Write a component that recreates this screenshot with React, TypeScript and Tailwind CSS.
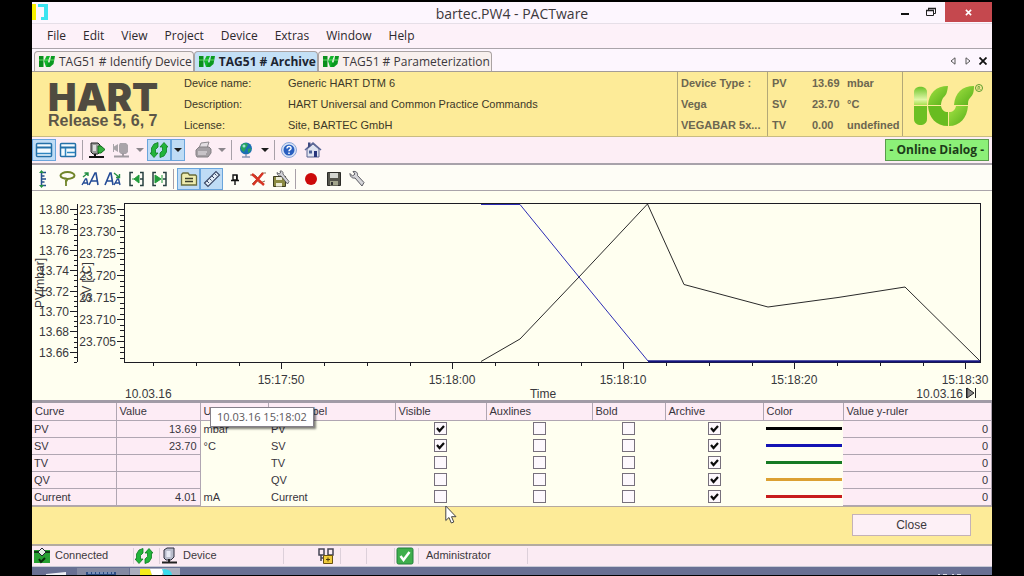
import clsx from "clsx";
import { useState } from "react";
import type { ReactNode } from "react";

const MENU_ITEMS = [
  "File",
  "Edit",
  "View",
  "Project",
  "Device",
  "Extras",
  "Window",
  "Help",
];

const TABS = ["TAG51 # Identify Device", "TAG51 # Archive", "TAG51 # Parameterization"];

const DEVICE_INFO = [
  { label: "Device name:", value: "Generic HART DTM 6" },
  { label: "Description:", value: "HART Universal and Common Practice Commands" },
  { label: "License:", value: "Site, BARTEC GmbH" },
];

const READINGS = [
  { name: "PV", value: "13.69", unit: "mbar" },
  { name: "SV", value: "23.70", unit: "°C" },
  { name: "TV", value: "0.00", unit: "undefined" },
];

interface Curve {
  name: string;
  value: string;
  unit: string;
  visible: boolean;
  auxlines: boolean;
  bold: boolean;
  archive: boolean;
  color: string;
}

type CurveFlag = "visible" | "auxlines" | "bold" | "archive";

const FLAGS: CurveFlag[] = ["visible", "auxlines", "bold", "archive"];

const base = { visible: false, auxlines: false, bold: false, archive: true };

const INITIAL_CURVES: Curve[] = [
  { ...base, name: "PV", value: "13.69", unit: "mbar", visible: true, color: "bg-black" },
  { ...base, name: "SV", value: "23.70", unit: "°C", visible: true, color: "bg-[#1414b4]" },
  { ...base, name: "TV", value: "", unit: "", color: "bg-[#167a24]" },
  { ...base, name: "QV", value: "", unit: "", color: "bg-[#dca032]" },
  { ...base, name: "Current", value: "4.01", unit: "mA", color: "bg-[#c81c1c]" },
];

const COLUMNS = [
  { label: "Curve", width: "w-[84px]" },
  { label: "Value", width: "w-[84px]" },
  { label: "Unit", width: "w-[68px]" },
  { label: "Curve label", width: "w-[127px]" },
  { label: "Visible", width: "w-[91px]" },
  { label: "Auxlines", width: "w-[106px]" },
  { label: "Bold", width: "w-[73px]" },
  { label: "Archive", width: "w-[98px]" },
  { label: "Color", width: "w-20" },
  { label: "Value y-ruler", width: "" },
];

const Icon = ({ children, className }: { children: ReactNode; className?: string }) => (
  <svg
    viewBox="0 0 18 18"
    className={clsx("size-[18px] shrink-0", className)}
    fill="none"
    aria-hidden="true"
  >
    {children}
  </svg>
);

const TabIcon = () => (
  <svg viewBox="0 0 16 13" className="h-[13px] w-4 shrink-0" aria-hidden="true">
    <path d="M0 1h4.500v11H0z" fill="#0a8f1c" />
    <path d="M5 6 7.500 1H11L9 6l2 6H7z" fill="#12b52a" />
    <path d="M9 7c1 2 2 1 3-6h4l-1.500 8-3.500 3H8z" fill="#0a9a1f" />
    <path d="M0 5h15" stroke="#7ce87c" strokeWidth=".8" />
  </svg>
);

const RefreshIcon = () => (
  <Icon>
    <path d="M8 1.500 4 3 1.500 7v5L0 12l4 4.500L8 12l-2.500 0V8.500L8 6z" fill="#22b43a" stroke="#0c7d20" strokeWidth=".8" />
    <path d="m10 16.500 4-1.500 2.500-4V6l1.500 0L14 1.500 10 6l2.500 0v3.500L10 12z" fill="#22b43a" stroke="#0c7d20" strokeWidth=".8" />
  </Icon>
);

const WindowIcon = ({ split }: { split?: boolean }) => (
  <Icon>
    <rect x="1.500" y="2.500" width="15" height="13" rx="1" fill="#f4fbff" stroke="#2470a8" strokeWidth="1.500" />
    <path d="M2 6.500h14" stroke="#2470a8" strokeWidth="2" />
    {split ? (
      <path d="M6.500 7v8M8 11.500h8" stroke="#2f86c0" strokeWidth="1.500" />
    ) : (
      <path d="M2 12.500h14" stroke="#2f86c0" strokeWidth="1.500" />
    )}
  </Icon>
);

const ConnectIcon = () => (
  <Icon>
    <path d="M3 2h7l2 2v7l-2 2H5l-2-2z" fill="#9a9a9a" stroke="#222" />
    <path d="M5 4h3v6H5z" fill="#dcdcdc" />
    <path d="M7 13v3M1 16h15" stroke="#111" strokeWidth="2" />
    <path d="M10 5h3l4 3.500-4 3.500h-3z" fill="#35b040" stroke="#126c1c" />
  </Icon>
);

const DisconnectIcon = () => (
  <Icon>
    <path d="M8 2h6l2 2v7l-2 2H9l-2-2V4z" fill="#a9a4a9" />
    <path d="M11 12v3M2 15.500h15" stroke="#a09aa0" strokeWidth="2" />
    <path d="M1 3h1v2.500l4-2.500v8L2 8.500V11H1z" fill="#a9a4a9" />
  </Icon>
);

const PrinterIcon = () => (
  <Icon>
    <path d="m7 2 8-1-2 6H5z" fill="#e3dfe3" stroke="#8d898d" />
    <path d="m2 9 3-3h10l2 2v4l-3 4H3l-1-2z" fill="#a39fa3" stroke="#858185" />
    <path d="M4 11h9M4 13h8" stroke="#ece8ec" />
  </Icon>
);

const GlobeIcon = () => (
  <Icon>
    <circle cx="9" cy="7.500" r="6" fill="#1c6fb4" />
    <path d="M4.500 4c3-3.500 6.500-2 6.500 0L9 7l-2 4C3 9 3.500 6 4.500 4z" fill="#25a35c" />
    <path d="m11 8 3-1c0 2-1 4-3 5z" fill="#25a35c" />
    <circle cx="7" cy="5" r="1.500" fill="#9fe0dc" />
    <path d="M5 16h8M9 13v3" stroke="#8a97b4" strokeWidth="1.500" />
  </Icon>
);

const HelpIcon = () => (
  <Icon>
    <circle cx="9" cy="9" r="7.500" fill="#d8e3f6" stroke="#8aa5d8" />
    <circle cx="9" cy="9" r="5.500" fill="#2a5fc0" />
    <path d="M7 7.500c0-3 4.500-2.500 4 0-.3 1.200-2 1.200-2 2.800M9 11.500v1.500" stroke="#fff" strokeWidth="1.500" />
  </Icon>
);

const HomeIcon = () => (
  <Icon>
    <path d="M3 8v8h12V8L9 3z" fill="#dfe3f0" stroke="#5b6590" />
    <path d="m1 9 8-7 8 7" stroke="#5b6796" strokeWidth="1.600" />
    <path d="M4 1.500h2.500V5L4 7z" fill="#3e4a80" />
    <path d="M10 10h3v6h-3z" fill="#27357c" />
    <path d="M5 9.500h3v3H5z" fill="#4d6296" />
  </Icon>
);

const RulerYIcon = () => (
  <Icon>
    <path d="M11 2.500H6.500v13H11M6.500 6h3M6.500 9H11M6.500 12h3" stroke="#26508e" strokeWidth="1.500" />
    <path d="M6.500 0 4 3h5zM6.500 18 4 15h5z" fill="#249044" />
  </Icon>
);

const LassoIcon = () => (
  <Icon>
    <ellipse cx="9.500" cy="5.500" rx="7" ry="3.500" stroke="#71852a" strokeWidth="2" />
    <path d="M6 8.500c4-1 4 3 1 3M8 10v6" stroke="#71852a" strokeWidth="1.800" />
  </Icon>
);

const FontScaleIcon = ({ shrink }: { shrink?: boolean }) => (
  <Icon>
    {shrink ? (
      <>
        <path d="M1 15 6 3h1l2 12M3 11h5" stroke="#244c96" strokeWidth="1.600" />
        <path d="m10 15 3.500-6h1L16 15M11.500 13H16" stroke="#244c96" strokeWidth="1.400" />
        <path d="m10 3 5 4M15.500 4v3.500H12" stroke="#249044" strokeWidth="1.400" />
      </>
    ) : (
      <>
        <path d="m1 15 3.500-6h1L7 15M2.500 13H7" stroke="#244c96" strokeWidth="1.400" />
        <path d="m8 15 6-12h1l2 12M10 11h6" stroke="#244c96" strokeWidth="1.600" />
        <path d="m2 7 5-4M3.500 3H7v3" stroke="#249044" strokeWidth="1.400" />
      </>
    )}
  </Icon>
);

const RangeIcon = ({ filled }: { filled?: boolean }) => (
  <Icon>
    <path d="M6 2.500H3v13h3M13 2.500h3v13h-3M13 9h3" stroke="#274040" strokeWidth="1.500" />
    {filled ? (
      <path d="m5 5 6 4-6 4zM12 5v8" fill="#219b3a" stroke="#219b3a" />
    ) : (
      <path d="m12 5-5 4 5 4zM5 9h2" fill="#219b3a" stroke="#219b3a" />
    )}
  </Icon>
);

const FolderIcon = () => (
  <Icon>
    <path d="M1.500 4.500 3 3h5l1.500 2h6l1 1v9h-15z" fill="#eeecae" stroke="#6a6d3c" strokeWidth="1.300" />
    <path d="M5 8.500h8M5 11.500h8" stroke="#3c402c" strokeWidth="1.300" />
  </Icon>
);

const RulerIcon = () => (
  <Icon>
    <path d="M1.500 13 13 1.500 16.500 5 5 16.500z" fill="#e4eef8" stroke="#3c4a68" strokeWidth="1.200" />
    <path d="m4 11 2 2M6.500 8.500l2 2M9 6l2 2M11.500 3.500l2 2" stroke="#3c4a68" />
  </Icon>
);

const PinIcon = () => (
  <Icon>
    <path d="M7 5h4v5H7zM5 10.500h8M9 10v5" stroke="#111" strokeWidth="1.400" />
    <path d="M10 5h1.500v5H10z" fill="#111" />
  </Icon>
);

const DeleteCurveIcon = () => (
  <Icon>
    <path d="M1 5h5l3 3 4-5h4M3 14l4-4 4 3 5-2" stroke="#8c6a50" />
    <path d="m3 4 12 11M14 3 4 15" stroke="#d83424" strokeWidth="2.400" />
  </Icon>
);

const SaveSettingsIcon = () => (
  <Icon>
    <path d="M1.500 6.500h12v10h-12z" fill="#8b8a42" stroke="#3c3c20" />
    <path d="M4 7h6v3H4zM4 13h6v3.500H4z" fill="#ececd8" />
    <path d="M5 2.500 7 4l1.500-1L8 1c2-.5 3.500 1 3 3l6 7.500-1.500 2.500-6.500-8C7 6.500 5 5 5 2.500z" fill="#d4d4d8" stroke="#4a4a50" strokeWidth=".8" />
  </Icon>
);

const RecordIcon = () => (
  <Icon>
    <circle cx="9" cy="9" r="6" fill="#cc0a0a" />
  </Icon>
);

const DiskIcon = () => (
  <Icon>
    <path d="M2.500 2.500h13v13h-13z" fill="#55554c" stroke="#2c2c28" />
    <path d="M5 3h8v5H5z" fill="#d4d6d0" />
    <path d="M5 11h8v4.500H5z" fill="#a3a58c" />
    <path d="M6 12h2v3H6z" fill="#333" />
  </Icon>
);

const WrenchIcon = () => (
  <Icon>
    <path
      d="M2 3.500 4.500 6 7 4 5 1.500c3-.5 5 1 4.500 4L16 12.500 14 16l-7-8C4.500 8.500 2 7 2 3.500z"
      fill="#d6d6da"
      stroke="#5a5a62"
    />
  </Icon>
);

const DeviceIcon = () => (
  <Icon>
    <path d="m3 3 3-2h7v9l-3 3H5l-2-2z" fill="#b9bccb" stroke="#2c2c3c" />
    <path d="M5.500 4h4v6h-4z" fill="#e8eaf4" />
    <path d="M8 12v3M1 15.500h15" stroke="#222" strokeWidth="2" />
  </Icon>
);

const ConnectedIcon = () => (
  <Icon className="size-4">
    <path d="M1 3h16v13H1z" fill="#27a032" />
    <path d="M1 5h4M13 5h4" stroke="#123c18" strokeWidth="2" />
    <path d="m9 1 4 4-4 4-4-4z" fill="#e4efe4" stroke="#223" />
    <path d="m6 12 2 3 4-4" stroke="#092c0c" strokeWidth="2" />
  </Icon>
);

const LockIcon = () => (
  <Icon>
    <path d="M2 2h5v6H2zM11 2h5v6h-5zM4 8v6M4 11h3" stroke="#444454" strokeWidth="1.500" />
    <path d="M6.500 8.500h9v8h-9z" fill="#f0cc3c" stroke="#6a5210" />
    <path d="M9 12.500h4M11 10.500v4" stroke="#4c3a08" />
  </Icon>
);

const RoleIcon = () => (
  <Icon className="size-4">
    <rect x="1" y="1" width="16" height="16" rx="1.500" fill="#3fae4c" stroke="#23803a" />
    <path d="m4.500 9 3 4 6-8" stroke="#fff" strokeWidth="2.500" />
  </Icon>
);

interface ToolButtonProps {
  label: string;
  children: ReactNode;
  width?: string;
  active?: boolean;
}

const ToolButton = ({ label, children, width = "w-6", active }: ToolButtonProps) => (
  <button
    type="button"
    aria-label={label}
    className={clsx(
      "flex h-[22px] shrink-0 items-center justify-center border",
      width,
      active ? "border-[#6aa5dc] bg-[#bfdcf5]" : "border-transparent"
    )}
  >
    {children}
  </button>
);

const CaretButton = ({ label, active, muted }: { label: string; active?: boolean; muted?: boolean }) => (
  <ToolButton label={label} width="w-3.5" active={active}>
    <svg viewBox="0 0 8 4" className="h-1 w-2" aria-hidden="true">
      <path d="M0 0h8L4 4z" fill={muted ? "#8c868c" : "#1c1c1c"} />
    </svg>
  </ToolButton>
);

const Separator = ({ wide }: { wide?: boolean }) => (
  <div className={clsx("h-5 w-px shrink-0 bg-[#a8a0a8]", wide ? "mx-[3px]" : "mx-0.5")} />
);

const TitleBar = () => (
  <header className="grid h-[22px] grid-cols-[1fr_auto_1fr] items-start border-b border-[#e6dfe8]">
    <svg viewBox="0 0 16 16" className="mt-0.5 h-4 w-4" aria-hidden="true">
      <path d="M0 0h4v16H0z" fill="#f8f000" />
      <path d="M6 0h10v16H9v-3h3V3H6z" fill="#3ce4f0" />
    </svg>
    <h1 className="text-sm leading-6 text-[#3c383c]">bartec.PW4 - PACTware</h1>
    <div className="flex justify-end">
      <button type="button" aria-label="Minimize" className="flex h-5 w-7 items-center justify-center">
        <svg viewBox="0 0 8 8" className="size-2" aria-hidden="true">
          <path d="M0 5h8v2H0z" fill="#111" />
        </svg>
      </button>
      <button type="button" aria-label="Restore" className="flex h-5 w-6 items-center justify-center">
        <svg viewBox="0 0 10 10" className="size-2.5" fill="none" aria-hidden="true">
          <path d="M.5 3.500h7v5h-7zM2.500 3V1.500h7v5H8" stroke="#222" />
          <path d="M0 3.500h8M2 1.500h8" stroke="#222" strokeWidth="1.500" />
        </svg>
      </button>
      <button
        type="button"
        aria-label="Close window"
        className="ml-0.5 flex h-5 w-[47px] items-center justify-center bg-[#c5484e]"
      >
        <svg viewBox="0 0 8 8" className="size-[7px]" aria-hidden="true">
          <path d="m1 1 6 6M7 1 1 7" stroke="#fff" strokeWidth="1.800" />
        </svg>
      </button>
    </div>
  </header>
);

const DeviceTabs = () => (
  <div className="flex h-[23px] items-end border-b border-[#a39c98] bg-[#fdf6fe] pl-0.5">
    <div role="tablist" className="flex h-5">
      {TABS.map((tab, index) => (
        <button
          key={tab}
          type="button"
          role="tab"
          aria-selected={index === 1}
          className={clsx(
            "flex items-center gap-1 rounded-t border border-b-0 border-[#aaa3a3] pr-px pl-1 text-xs whitespace-nowrap",
            index === 1 ? "bg-[#c4e0f6] font-bold text-[#1c2430]" : "bg-[#f8f0ee] text-[#3c383c]"
          )}
        >
          <TabIcon />
          {tab}
        </button>
      ))}
    </div>
    <div className="ml-auto flex h-5 items-center gap-1 pr-[3px]">
      <button type="button" aria-label="Previous tab" className="flex w-3 justify-center">
        <svg viewBox="0 0 6 8" className="h-2 w-1.5" fill="none" aria-hidden="true">
          <path d="M5 .8v6.400L1 4z" stroke="#555" />
        </svg>
      </button>
      <button type="button" aria-label="Next tab" className="flex w-2.5 justify-center">
        <svg viewBox="0 0 6 8" className="h-2 w-1.5" fill="none" aria-hidden="true">
          <path d="M1 .8v6.400L5 4z" stroke="#555" />
        </svg>
      </button>
      <button type="button" aria-label="Close tab" className="flex w-3 justify-center">
        <svg viewBox="0 0 8 8" className="size-2" aria-hidden="true">
          <path d="m.5.5 7 7M7.500.5l-7 7" stroke="#111" strokeWidth="1.800" />
        </svg>
      </button>
    </div>
  </div>
);

const VendorLogo = () => (
  <svg viewBox="0 0 72 44" className="h-11 w-[72px]" aria-label="Vendor logo" role="img">
    <defs>
      <linearGradient id="leaf" x1="0" y1="0" x2="1" y2="1">
        <stop offset="0" stopColor="#a4e244" />
        <stop offset="1" stopColor="#55ae18" />
      </linearGradient>
      <linearGradient id="stem" x1="0" y1="0" x2="0" y2="1">
        <stop offset="0" stopColor="#6cc428" />
        <stop offset=".7" stopColor="#e0f6a8" />
        <stop offset="1" stopColor="#a8e050" />
      </linearGradient>
    </defs>
    <path d="M1 21V8c0-7 13-7 13 0v13z" fill="url(#stem)" />
    <path d="M1 22h13v13c0 8-13 8-13 0z" fill="#6cc024" />
    <path d="M15 21C16 9 23 2 35 2c-1 8-2 9-5 12-1 2-2 4-2 7z" fill="url(#leaf)" />
    <path d="M15 22h13c1 4 3 6 7 6v14c-12 0-19-8-20-20z" fill="#68bc20" />
    <path d="M36 28c4 0 6-2 7-6h12c-1 12-8 20-19 20z" fill="url(#leaf)" />
    <path d="M41 21C42 9 49 2 61 2c0 6-1 9-4 12-2 2-2 4-2 7z" fill="url(#leaf)" />
    <circle cx="66" cy="4" r="3.500" fill="none" stroke="#5a9c2c" />
    <path d="M65 6V2.500h1.500q1 1-.5 1.700L67.500 6" fill="none" stroke="#5a9c2c" strokeWidth=".8" />
  </svg>
);

const DeviceHeader = () => (
  <section className="flex h-[65px] border-b border-[#c9bc82] bg-[#fdeb98] font-['Liberation_Sans',Arial,sans-serif] text-[11px] leading-[21px] text-[#3c3828]">
    <div className="w-[152px] shrink-0 pt-[9px] pl-4 text-[#504b40]">
      <div className="font-['Inter',sans-serif] text-[38px] leading-8 font-black">HART</div>
      <div className="text-base leading-4 font-bold whitespace-nowrap text-[#5c5648]">
        Release 5, 6, 7
      </div>
    </div>
    <dl className="grid flex-1 grid-cols-[104px_1fr] content-start pt-px">
      {DEVICE_INFO.map((row) => (
        <div key={row.label} className="contents">
          <dt>{row.label}</dt>
          <dd className="whitespace-nowrap">{row.value}</dd>
        </div>
      ))}
    </dl>
    <div className="w-[90px] shrink-0 border-l border-[#b3a877] pt-px pl-[3px] font-bold whitespace-nowrap text-[#6c6650]">
      <p>Device Type :</p>
      <p>Vega</p>
      <p>VEGABAR 5x...</p>
    </div>
    <dl className="w-[135px] shrink-0 border-l border-[#b3a877] pt-px pl-1 font-bold text-[#6c6650]">
      {READINGS.map((reading) => (
        <div key={reading.name} className="flex">
          <dt className="w-10">{reading.name}</dt>
          <dd className="w-[35px]">{reading.value}</dd>
          <dd>{reading.unit}</dd>
        </div>
      ))}
    </dl>
    <div className="w-[90px] shrink-0 border-l border-[#b3a877] pt-3 pl-2.5">
      <VendorLogo />
    </div>
  </section>
);

const MainToolbar = () => (
  <div className="flex h-7 items-center border-b-2 border-[#a8a2aa] bg-[#fdeef5]">
    <ToolButton label="Single view" active>
      <WindowIcon />
    </ToolButton>
    <ToolButton label="Split view">
      <WindowIcon split />
    </ToolButton>
    <Separator />
    <ToolButton label="Connect">
      <ConnectIcon />
    </ToolButton>
    <ToolButton label="Disconnect">
      <DisconnectIcon />
    </ToolButton>
    <CaretButton label="Disconnect options" muted />
    <ToolButton label="Cyclic update" active>
      <RefreshIcon />
    </ToolButton>
    <CaretButton label="Update options" active />
    <div className="ml-1.5 flex">
      <ToolButton label="Print">
        <PrinterIcon />
      </ToolButton>
      <CaretButton label="Print options" muted />
    </div>
    <Separator />
    <ToolButton label="Language">
      <GlobeIcon />
    </ToolButton>
    <CaretButton label="Language options" />
    <Separator />
    <ToolButton label="Help">
      <HelpIcon />
    </ToolButton>
    <ToolButton label="Home">
      <HomeIcon />
    </ToolButton>
    <button
      type="button"
      className="mr-[3px] ml-auto h-[22px] border border-[#5a9a4c] bg-[#8cf078] px-1 text-xs font-bold text-[#1c3c18]"
    >
      - Online Dialog -
    </button>
  </div>
);

const CURVE_TOOLS = [
  { label: "Fit y axis", icon: <RulerYIcon /> },
  { label: "Select area", icon: <LassoIcon /> },
  { label: "Larger text", icon: <FontScaleIcon /> },
  { label: "Smaller text", icon: <FontScaleIcon shrink /> },
  { label: "Compress time", icon: <RangeIcon /> },
  { label: "Expand time", icon: <RangeIcon filled /> },
];

const VIEW_TOOLS = [
  { label: "Curve list", icon: <FolderIcon />, active: true },
  { label: "Ruler", icon: <RulerIcon />, active: true },
  { label: "Pin", icon: <PinIcon /> },
  { label: "Delete curves", icon: <DeleteCurveIcon /> },
  { label: "Save settings", icon: <SaveSettingsIcon /> },
];

const FILE_TOOLS = [
  { label: "Record", icon: <RecordIcon /> },
  { label: "Save", icon: <DiskIcon /> },
  { label: "Settings", icon: <WrenchIcon /> },
];

const ChartToolbar = () => (
  <div className="flex h-[26px] items-end border-b border-[#aaa4aa] bg-[#fefdf6]">
    {[CURVE_TOOLS, VIEW_TOOLS, FILE_TOOLS].map((group, index) => (
      <div key={group[0].label} className="flex items-center">
        {index > 0 && <Separator wide />}
        {group.map((tool) => (
          <ToolButton
            key={tool.label}
            label={tool.label}
            width="w-[23px]"
            active={"active" in tool}
          >
            {tool.icon}
          </ToolButton>
        ))}
      </div>
    ))}
  </div>
);

const PV_LABELS = ["13.80", "13.78", "13.76", "13.74", "13.72", "13.70", "13.68", "13.66"];
const SV_LABELS = ["23.735", "23.730", "23.725", "23.720", "23.715", "23.710", "23.705"];
const TIME_LABELS = ["15:17:50", "15:18:00", "15:18:10", "15:18:20", "15:18:30"];

const pvTicks = Array.from({ length: 31 }, (_, i) => 209 + i * 5.1);
const svTicks = Array.from({ length: 28 }, (_, i) => 209 + i * 5.5);
const timeTicks = Array.from({ length: 20 }, (_, i) => 153 + i * 42.75);

const TrendChart = () => (
  <svg
    viewBox="32 191 960 209"
    className="block w-full overflow-visible bg-[#fffff0] font-['Liberation_Sans',Arial,sans-serif] text-xs"
    role="img"
    aria-label="PV and SV over time"
  >
    <g stroke="#1c1c24" fill="none">
      <path d="M77.500 204v158" />
      {pvTicks.map((y, i) => (
        <path key={y} d={`M${i % 4 === 0 ? 70 : 74} ${Math.round(y) + 0.5}H77`} />
      ))}
      {svTicks.map((y, i) => (
        <path key={y} d={`M${i % 4 === 0 ? 117 : 120} ${Math.round(y) + 0.5}H124`} />
      ))}
      {timeTicks.map((x, i) => (
        <path key={x} d={`M${Math.round(x) + 0.5} 362v${i % 4 === 3 ? 7 : 4}`} />
      ))}
      <rect x="124.500" y="203.500" width="856" height="159" />
    </g>
    <path
      d="M481 361.500 520 339 579 277 647.500 204 684 284.500 768 307 838 297.500 905 287 980 361"
      fill="none"
      stroke="#2a2a2a"
    />
    <path d="M481 204.500h39L579 277l69 84h332" fill="none" stroke="#2c2cb4" />
    <path d="M648 361.500h332" fill="none" stroke="#14147c" strokeWidth="2" />
    <g fill="#38383c">
      {PV_LABELS.map((label, i) => (
        <text key={label} x="69" y={Math.round(214 + i * 20.4)} textAnchor="end">
          {label}
        </text>
      ))}
      {SV_LABELS.map((label, i) => (
        <text key={label} x="116" y={214 + i * 22} textAnchor="end">
          {label}
        </text>
      ))}
      {TIME_LABELS.map((label, i) => (
        <text key={label} x={281 + i * 171} y="384" textAnchor="middle">
          {label}
        </text>
      ))}
      <text transform="translate(44 283) rotate(-90)" textAnchor="middle">
        PV[mbar]
      </text>
      <text transform="translate(91 282) rotate(-90)" textAnchor="middle">
        SV [°C]
      </text>
      <text x="125" y="398">
        10.03.16
      </text>
      <text x="543" y="398" textAnchor="middle">
        Time
      </text>
      <text x="963" y="398" textAnchor="end">
        10.03.16
      </text>
    </g>
    <path d="M966.500 388v10M975.500 388v10M967 388l7 5-7 5z" fill="#8a8a8a" stroke="#222" />
  </svg>
);

interface FlagBoxProps {
  label: string;
  checked: boolean;
  onChange: () => void;
}

const FlagBox = ({ label, checked, onChange }: FlagBoxProps) => (
  <label className="relative mx-auto block size-[13px]">
    <input
      type="checkbox"
      aria-label={label}
      checked={checked}
      onChange={onChange}
      className="block size-[13px] appearance-none border border-[#77707c] bg-[#fdf8fd]"
    />
    {checked && (
      <svg
        viewBox="0 0 13 13"
        className="pointer-events-none absolute inset-0 size-[13px]"
        aria-hidden="true"
      >
        <path d="m3 6 2.500 3L10 4" fill="none" stroke="#0c0c0c" strokeWidth="2.200" />
      </svg>
    )}
  </label>
);

const CurveTable = () => {
  const [curves, setCurves] = useState(INITIAL_CURVES);

  const toggle = (name: string, flag: CurveFlag) => {
    setCurves((prev) =>
      prev.map((curve) => (curve.name === name ? { ...curve, [flag]: !curve[flag] } : curve))
    );
  };

  return (
    <div className="relative border-t-[3px] border-b border-t-[#a19ba6] border-b-[#b5a9a0]">
      <table className="w-full table-fixed border-collapse bg-[#fffff0] font-['Liberation_Sans',Arial,sans-serif] text-[11px] leading-4 text-[#38343c]">
        <thead>
          <tr className="h-[17px] bg-[#fdecf5]">
            {COLUMNS.map((column) => (
              <th
                key={column.label}
                className={clsx(
                  "border-r border-b border-[#b0a6b2] px-[3px] text-left font-normal whitespace-nowrap",
                  column.width
                )}
              >
                {column.label}
              </th>
            ))}
          </tr>
        </thead>
        <tbody>
          {curves.map((curve) => (
            <tr key={curve.name} className="h-[17px]">
              <td className="border-r border-b border-[#b0a6b2] bg-[#fdecf5] px-0.5">
                {curve.name}
              </td>
              <td className="border-r border-b border-[#b0a6b2] bg-[#fdecf5] px-[3px] text-right">
                {curve.value}
              </td>
              <td className="px-[3px]">{curve.unit}</td>
              <td className="px-[3px]">{curve.name}</td>
              {FLAGS.map((flag) => (
                <td key={flag}>
                  <FlagBox
                    label={`${curve.name} ${flag}`}
                    checked={curve[flag]}
                    onChange={() => toggle(curve.name, flag)}
                  />
                </td>
              ))}
              <td className="pr-px pl-[3px]">
                <div className={clsx("h-[3px]", curve.color)} />
              </td>
              <td className="border-r border-b border-[#b0a6b2] bg-[#fdecf5] px-[3px] text-right">
                0
              </td>
            </tr>
          ))}
        </tbody>
      </table>
      <div
        role="tooltip"
        className="absolute top-1 left-[178px] border border-[#85808a] bg-white px-1.5 text-[11px] leading-[18px] whitespace-nowrap text-[#5c585c] shadow-[2px_2px_2px_rgba(0,0,0,0.5)]"
      >
        10.03.16 15:18:02
      </div>
      <svg
        viewBox="0 0 12 19"
        className="pointer-events-none absolute top-[102px] left-[413px] h-[19px] w-3"
        aria-hidden="true"
      >
        <path d="M.8 1v14.500L4 12.500 6.300 18l2.500-1L6.500 11.700H11z" fill="#fff" stroke="#444" />
      </svg>
    </div>
  );
};

const StatusCell = ({ children, width }: { children?: ReactNode; width: string }) => (
  <div
    className={clsx("flex h-4 shrink-0 items-center gap-1 border-r border-[#ddd0da] pl-px", width)}
  >
    {children}
  </div>
);

const StatusBar = () => (
  <footer className="flex h-[23px] items-center border-t-2 border-b border-t-[#b3aba0] border-b-[#c8cad6] bg-[#fbebf3] font-['Liberation_Sans',Arial,sans-serif] text-[11px] text-[#3c383c]">
    <StatusCell width="w-[102px]">
      <ConnectedIcon />
      Connected
    </StatusCell>
    <StatusCell width="w-[26px]">
      <RefreshIcon />
    </StatusCell>
    <StatusCell width="w-[124px]">
      <DeviceIcon />
      Device
    </StatusCell>
    <div className="w-8 shrink-0" />
    <StatusCell width="w-[25px]">
      <LockIcon />
    </StatusCell>
    <StatusCell width="w-[26px]" />
    <StatusCell width="w-[28px]" />
    <StatusCell width="w-6">
      <RoleIcon />
    </StatusCell>
    <StatusCell width="w-[109px]">
      <span className="pl-1.5">Administrator</span>
    </StatusCell>
  </footer>
);

const Taskbar = () => (
  <div className="flex h-2 bg-[#687093]">
    <svg viewBox="0 0 148 8" className="h-2 w-[148px]" aria-hidden="true">
      <path d="m14 7 20-2v3H14z" fill="#eef0f6" />
      <path d="M45 1h52v7H45z" fill="#8389a2" />
      <path d="M54 5h30v3H54z" fill="#2c4c84" />
      <path d="M56 6h26" stroke="#c0d0ec" strokeDasharray="3 1" />
      <path d="M98 1h50v7H98z" fill="#aaaebd" />
      <path d="M108 2h10l2 6h-12z" fill="#f4ec1c" />
      <path d="M118 2h14l-2 6h-10z" fill="#fff" />
      <path d="M130 2q10 0 10 6h-8z" fill="#38dcec" />
    </svg>
    <svg viewBox="0 0 28 8" className="mr-7 ml-auto h-2 w-7" aria-hidden="true">
      <path d="M2 7.500h24" stroke="#d4d8e4" strokeDasharray="2 3 4 5" />
    </svg>
  </div>
);

export default function App() {
  return (
    <div className="min-h-screen bg-black px-8 py-0.5 font-['Open_Sans','Noto_Sans',sans-serif]">
      <main className="bg-[#fdf6fe]">
        <TitleBar />
        <nav className="flex h-[25px] items-center gap-[17px] border-b border-[#aaa4aa] bg-[#fdf1f9] pl-[15px] text-xs text-[#2c282c]">
          {MENU_ITEMS.map((item) => (
            <button key={item} type="button">
              {item}
            </button>
          ))}
        </nav>
        <DeviceTabs />
        <DeviceHeader />
        <MainToolbar />
        <ChartToolbar />
        <TrendChart />
        <CurveTable />
        <div className="flex h-[37px] items-center justify-end bg-[#fdeb98] pr-[21px]">
          <button
            type="button"
            className="h-[22px] w-[119px] border border-[#c4b2b8] bg-[#fdf0f6] font-['Liberation_Sans',Arial,sans-serif] text-xs text-[#3c383c]"
          >
            Close
          </button>
        </div>
        <StatusBar />
        <Taskbar />
      </main>
    </div>
  );
}
